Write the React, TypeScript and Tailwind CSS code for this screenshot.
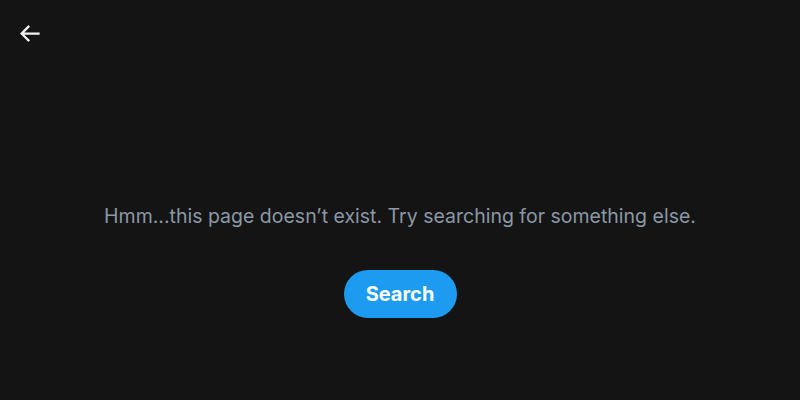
export default function App() {
  return (
    <div className="w-[800px] h-[400px] bg-[#141414] flex flex-col font-['Inter',sans-serif] overflow-hidden">
      <div className="h-[66px] flex items-center pl-[16px]">
        <svg viewBox="0 0 24 24" className="w-[27px] h-[27px]" fill="#eef0f1">
          <path d="M7.414 13l5.043 5.04-1.414 1.42L3.586 12l7.457-7.46 1.414 1.42L7.414 11H21v2H7.414z" />
        </svg>
      </div>
      <div className="flex flex-col items-center pt-[137px]">
        <p className="text-[19.5px] leading-[26px] text-[#8b98a5]">
          Hmm...this page doesn’t exist. Try searching for something else.
        </p>
        <button className="mt-[41px] h-[48px] w-[113px] rounded-full bg-[#1d9bf0] text-white font-bold text-[20px]">
          Search
        </button>
      </div>
    </div>
  );
}
